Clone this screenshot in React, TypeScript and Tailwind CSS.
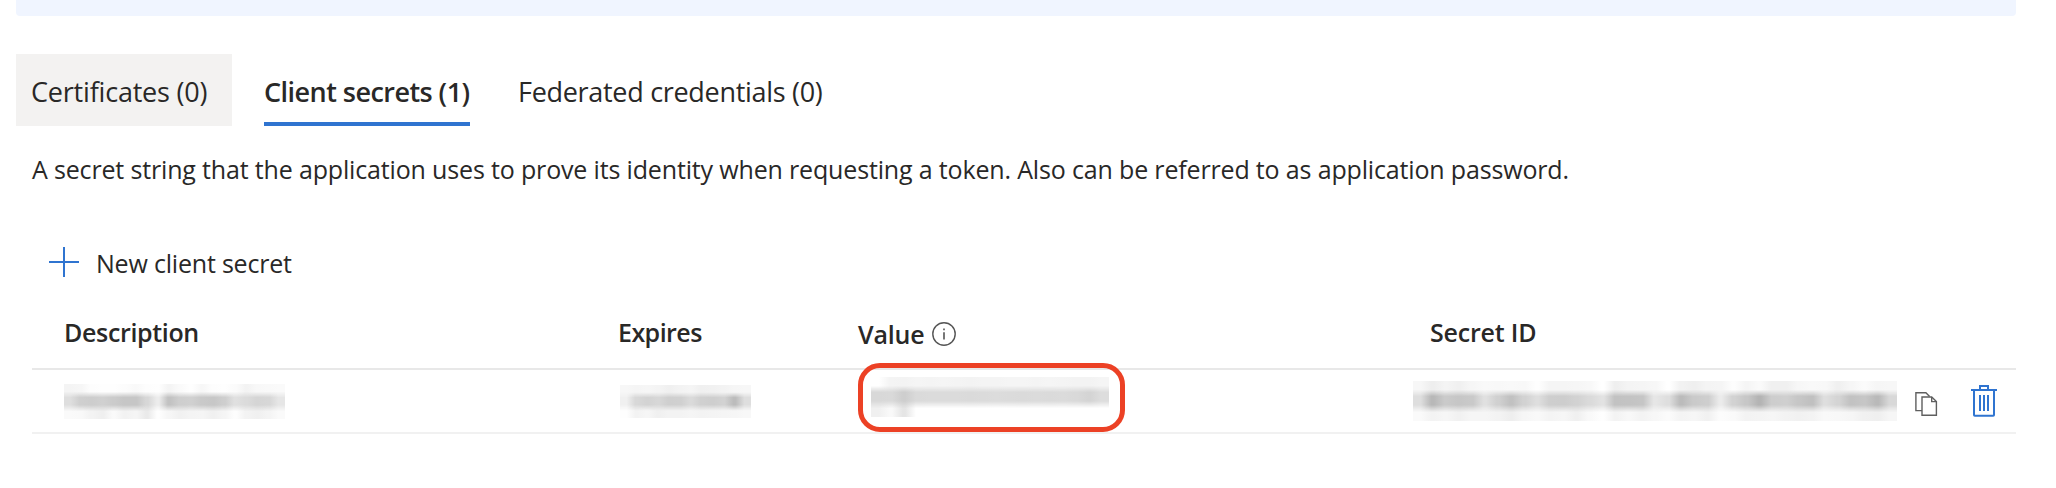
import React from 'react';

const redactions = {
  description: {
    top: [244, 246, 253, 254, 254, 252, 249, 253, 254, 244, 250, 254, 247, 253, 254, 251, 243, 248, 249, 250],
    middle: [222, 207, 205, 208, 203, 198, 198, 215, 236, 194, 206, 208, 201, 199, 206, 224, 219, 213, 215, 230],
    bottom: [250, 249, 243, 239, 250, 242, 245, 234, 254, 246, 241, 244, 245, 240, 245, 253, 243, 240, 244, 250],
  },
  expires: {
    top: [247, 245, 246, 244, 240, 243, 245, 240, 241, 243, 246, 247],
    middle: [240, 216, 211, 215, 207, 208, 218, 208, 206, 210, 188, 222],
    bottom: [254, 243, 246, 240, 243, 243, 245, 243, 244, 245, 246, 248],
  },
  value: {
    top: [255, 244, 243, 245, 244, 245, 244, 243, 244, 244, 245, 245, 244, 245, 244, 243, 243, 245],
    middle: [216, 217, 206, 218, 219, 219, 219, 218, 219, 220, 219, 218, 219, 218, 219, 217, 212, 221],
    bottom: [240, 249, 229, 255, 255, 255, 255, 255, 255, 255, 255, 255, 255, 255, 255, 255, 255, 255],
  },
  secretId: {
    top: [247, 238, 244, 240, 246, 249, 248, 249, 248, 254, 245, 245, 246, 248, 255, 239, 244, 245, 247, 255, 242, 239, 244, 245, 253, 245, 250, 240, 240, 247, 249, 248, 240, 246, 251, 246, 247],
    middle: [222, 184, 202, 198, 201, 224, 208, 193, 210, 222, 206, 205, 210, 218, 226, 194, 195, 197, 230, 222, 187, 202, 206, 235, 210, 199, 180, 205, 207, 198, 192, 222, 212, 194, 198, 185, 216],
    bottom: [250, 243, 246, 241, 246, 246, 243, 238, 246, 249, 244, 246, 240, 249, 254, 243, 248, 243, 247, 251, 244, 246, 241, 252, 250, 243, 244, 246, 243, 241, 243, 249, 248, 246, 241, 239, 246],
  },
};

const shades = (levels: number[]) =>
  `linear-gradient(to right, ${levels
    .map((v, i) => {
      const step = 100 / levels.length;
      return `rgb(${v},${v},${v}) ${(i + 0.4) * step}%, rgb(${v},${v},${v}) ${(i + 0.6) * step}%`;
    })
    .join(', ')})`;

function Redacted({ data, className }: { data: { top: number[]; middle: number[]; bottom: number[] }; className: string }) {
  return (
    <div aria-hidden="true" className={`relative flex flex-col overflow-hidden ${className}`}>
      <div className="flex-1" style={{ backgroundImage: shades(data.top) }} />
      <div className="flex-1" style={{ backgroundImage: shades(data.bottom) }} />
      <div
        className="absolute inset-0 [mask-image:linear-gradient(to_bottom,transparent_22%,black_38%,black_60%,transparent_78%)]"
        style={{ backgroundImage: shades(data.middle) }}
      />
    </div>
  );
}

function PlusIcon() {
  return (
    <svg width="30" height="30" viewBox="0 0 30 30" fill="none" stroke="#2f74d0" strokeWidth="2">
      <path d="M15 0v30M0 15h30" />
    </svg>
  );
}

function InfoIcon() {
  return (
    <svg width="24" height="24" viewBox="0 0 24 24" fill="none" stroke="#555" strokeWidth="1.4">
      <circle cx="12" cy="12" r="11.2" />
      <path d="M12 10.2v7.3M12 6.4v1.9" strokeWidth="1.6" />
    </svg>
  );
}

function CopyIcon() {
  return (
    <svg width="24" height="26" viewBox="0 0 24 26" fill="none" stroke="#5f5f5f" strokeWidth="1.4">
      <path d="M7 19.6H.9V1.7h10l3.7 3.9" />
      <path d="M7 6h9.7l4.7 4.6v13.7H7z" />
      <path d="M16.7 6v4.6h4.7" />
    </svg>
  );
}

function TrashIcon() {
  return (
    <svg width="26" height="32" viewBox="0 0 26 32" fill="none" stroke="#2f74d0" strokeWidth="2">
      <path d="M0 5h26M9 5V1h8v4M3 5v25q0 .8.8.8h18.4q.8 0 .8-.8V5M9 10v16M13 10v16M17 10v16" />
    </svg>
  );
}

const columns = 'grid grid-cols-[554px_240px_571px_1fr]';

export default function App() {
  return (
    <div className="h-[488px] w-[2056px] overflow-hidden bg-white pl-4 pr-10 font-['Open_Sans','Noto_Sans',sans-serif] text-[25px] text-[#292827]">
      <div className="h-4 rounded-b bg-[#f0f5ff]" />

      <div role="tablist" className="mt-[38px] flex h-[72px] text-[27px] leading-[76px] whitespace-nowrap">
        <button role="tab" className="w-[216px] bg-[#f3f2f1] pl-[15px] text-left tracking-[-0.2px]">
          <span className="block h-[72px]">Certificates (0)</span>
        </button>
        <button
          role="tab"
          aria-selected="true"
          className="ml-8 w-[206px] border-b-4 border-[#2f74d0] text-left font-semibold tracking-[-0.54px]"
        >
          <span className="block h-[68px]">Client secrets (1)</span>
        </button>
        <button role="tab" className="ml-12 text-left tracking-[-0.3px]">
          <span className="block h-[72px]">Federated credentials (0)</span>
        </button>
      </div>

      <p className="mt-[23px] ml-4 h-10 leading-10 tracking-[-0.16px] whitespace-nowrap">
        A secret string that the application uses to prove its identity when requesting a token. Also can be referred to
        as application password.
      </p>

      <button className="mt-11 ml-[33px] flex h-[60px] items-center gap-[17px] leading-[60px] tracking-[-0.2px]">
        <span className="pb-0.5">
          <PlusIcon />
        </span>
        <span>New client secret</span>
      </button>

      <div className="ml-4">
        <div className={`${columns} h-[77px] items-center border-b-2 border-[#e8e8e8] pl-8 font-semibold`}>
          <div className="pt-1 tracking-[-0.34px]">Description</div>
          <div className="pt-1 tracking-[-0.55px]">Expires</div>
          <div className="flex items-center gap-[7px] pt-2 tracking-[-0.15px]">
            Value
            <span className="pb-0.5">
              <InfoIcon />
            </span>
          </div>
          <div className="pt-1 pl-px tracking-[-0.2px]">Secret ID</div>
        </div>

        <div className={`${columns} h-16 border-b-2 border-[#f1f1f1] pl-8`}>
          <Redacted data={redactions.description} className="mt-3.5 h-[35px] w-[221px]" />
          <Redacted data={redactions.expires} className="mt-[15px] ml-0.5 h-[33px] w-[131px]" />
          <div className="relative pt-[7px] pl-[13px]">
            <Redacted data={redactions.value} className="h-10 w-[238px]" />
            <div className="absolute -top-[7px] left-0 h-[69px] w-[267px] rounded-[22px] border-5 border-[#ec4125]" />
          </div>
          <div className="-ml-4 flex pt-[11px]">
            <Redacted data={redactions.secretId} className="h-10 w-[484px]" />
            <button aria-label="Copy" className="mt-2.5 ml-[18px] h-[26px]">
              <CopyIcon />
            </button>
            <button aria-label="Delete" className="mt-1 ml-8 h-8">
              <TrashIcon />
            </button>
          </div>
        </div>
      </div>
    </div>
  );
}
